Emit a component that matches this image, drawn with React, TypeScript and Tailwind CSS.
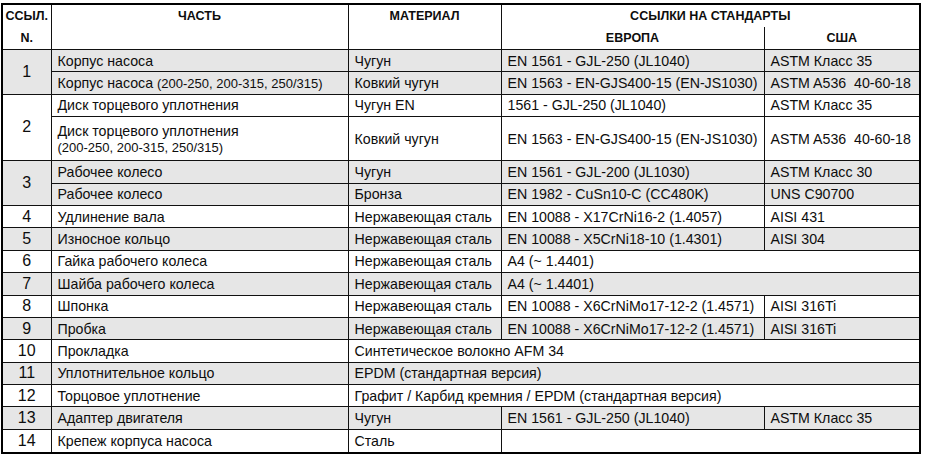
import React from 'react';

type Cell = { text: React.ReactNode; span?: number };
type Line = { part: React.ReactNode; cells: Cell[]; tall?: boolean };
type Group = { ref: string; grey: boolean; lines: Line[] };

const small = (s: string) => <span className="text-[13px]">{s}</span>;

const STEEL = 'Нержавеющая сталь';

const groups: Group[] = [
  {
    ref: '1', grey: true, lines: [
      { part: 'Корпус насоса', cells: [{ text: 'Чугун' }, { text: 'EN 1561 - GJL-250 (JL1040)' }, { text: 'ASTM Класс 35' }] },
      { part: <>Корпус насоса {small('(200-250, 200-315, 250/315)')}</>, cells: [{ text: 'Ковкий чугун' }, { text: 'EN 1563 - EN-GJS400-15 (EN-JS1030)' }, { text: 'ASTM A536\u00a0 40-60-18' }] },
    ],
  },
  {
    ref: '2', grey: false, lines: [
      { part: 'Диск торцевого уплотнения', cells: [{ text: 'Чугун EN' }, { text: '1561 - GJL-250 (JL1040)' }, { text: 'ASTM Класс 35' }] },
      {
        part: <><div>Диск торцевого уплотнения</div><div className="text-[13px] leading-[15px]">(200-250, 200-315, 250/315)</div></>,
        tall: true,
        cells: [{ text: 'Ковкий чугун' }, { text: 'EN 1563 - EN-GJS400-15 (EN-JS1030)' }, { text: 'ASTM A536\u00a0 40-60-18' }],
      },
    ],
  },
  {
    ref: '3', grey: true, lines: [
      { part: 'Рабочее колесо', cells: [{ text: 'Чугун' }, { text: 'EN 1561 - GJL-200 (JL1030)' }, { text: 'ASTM Класс 30' }] },
      { part: 'Рабочее колесо', cells: [{ text: 'Бронза' }, { text: 'EN 1982 - CuSn10-C (CC480K)' }, { text: 'UNS C90700' }] },
    ],
  },
  { ref: '4', grey: false, lines: [{ part: 'Удлинение вала', cells: [{ text: STEEL }, { text: 'EN 10088 - X17CrNi16-2 (1.4057)' }, { text: 'AISI 431' }] }] },
  { ref: '5', grey: true, lines: [{ part: 'Износное кольцо', cells: [{ text: STEEL }, { text: 'EN 10088 - X5CrNi18-10 (1.4301)' }, { text: 'AISI 304' }] }] },
  { ref: '6', grey: false, lines: [{ part: 'Гайка рабочего колеса', cells: [{ text: STEEL }, { text: 'A4 (~ 1.4401)', span: 2 }] }] },
  { ref: '7', grey: true, lines: [{ part: 'Шайба рабочего колеса', cells: [{ text: STEEL }, { text: 'A4 (~ 1.4401)', span: 2 }] }] },
  { ref: '8', grey: false, lines: [{ part: 'Шпонка', cells: [{ text: STEEL }, { text: 'EN 10088 - X6CrNiMo17-12-2 (1.4571)' }, { text: 'AISI 316Ti' }] }] },
  { ref: '9', grey: true, lines: [{ part: 'Пробка', cells: [{ text: STEEL }, { text: 'EN 10088 - X6CrNiMo17-12-2 (1.4571)' }, { text: 'AISI 316Ti' }] }] },
  { ref: '10', grey: false, lines: [{ part: 'Прокладка', cells: [{ text: 'Синтетическое волокно AFM 34', span: 3 }] }] },
  { ref: '11', grey: true, lines: [{ part: 'Уплотнительное кольцо', cells: [{ text: 'EPDM (стандартная версия)', span: 3 }] }] },
  { ref: '12', grey: false, lines: [{ part: 'Торцовое уплотнение', cells: [{ text: 'Графит / Карбид кремния / EPDM (стандартная версия)', span: 3 }] }] },
  { ref: '13', grey: true, lines: [{ part: 'Адаптер двигателя', cells: [{ text: 'Чугун' }, { text: 'EN 1561 - GJL-250 (JL1040)' }, { text: 'ASTM Класс 35' }] }] },
  { ref: '14', grey: false, lines: [{ part: 'Крепеж корпуса насоса', cells: [{ text: 'Сталь' }, { text: '', span: 2 }] }] },
];

const td = 'border border-[#111] px-[6px] align-middle whitespace-nowrap';
const th = 'border border-[#111] text-center align-middle font-bold text-[12.5px] leading-[22px]';

export default function App() {
  return (
    <div className="w-[927px] h-[455px] bg-white pt-[3px] pl-[1px]" style={{ fontFamily: '"Liberation Sans", Arial, sans-serif' }}>
      <div className="w-[920px] border-2 border-black">
        <table className="w-[916px] table-fixed border-collapse border-hidden text-[14.2px] leading-[18px] text-[#0d0d0d]">
          <colgroup>
            <col className="w-[48px]" />
            <col className="w-[297px]" />
            <col className="w-[153px]" />
            <col className="w-[263px]" />
            <col className="w-[155px]" />
          </colgroup>
          <thead>
            <tr className="h-[22px]">
              <th rowSpan={2} className={th}>
                <div>ССЫЛ.</div>
                <div>N.</div>
              </th>
              <th rowSpan={2} className={`${th} !align-top`}>ЧАСТЬ</th>
              <th rowSpan={2} className={`${th} !align-top`}>МАТЕРИАЛ</th>
              <th colSpan={2} className={`${th} border-b-0`}>ССЫЛКИ НА СТАНДАРТЫ</th>
            </tr>
            <tr className="h-[22px]">
              <th className={`${th} border-t-0`}>ЕВРОПА</th>
              <th className={`${th} border-t-0`}>США</th>
            </tr>
          </thead>
          <tbody>
            {groups.map((g) =>
              g.lines.map((l, i) => (
                <tr key={g.ref + i} className={`${l.tall ? 'h-[44px]' : 'h-[22.4px]'} ${g.grey ? 'bg-[#e6e6e6]' : 'bg-white'}`}>
                  {i === 0 && (
                    <td rowSpan={g.lines.length} className="border border-[#111] text-center align-middle text-[16px]">
                      {g.ref}
                    </td>
                  )}
                  <td className={td}>{l.part}</td>
                  {l.cells.map((c, j) => (
                    <td key={j} colSpan={c.span} className={td}>{c.text}</td>
                  ))}
                </tr>
              ))
            )}
          </tbody>
        </table>
      </div>
    </div>
  );
}
